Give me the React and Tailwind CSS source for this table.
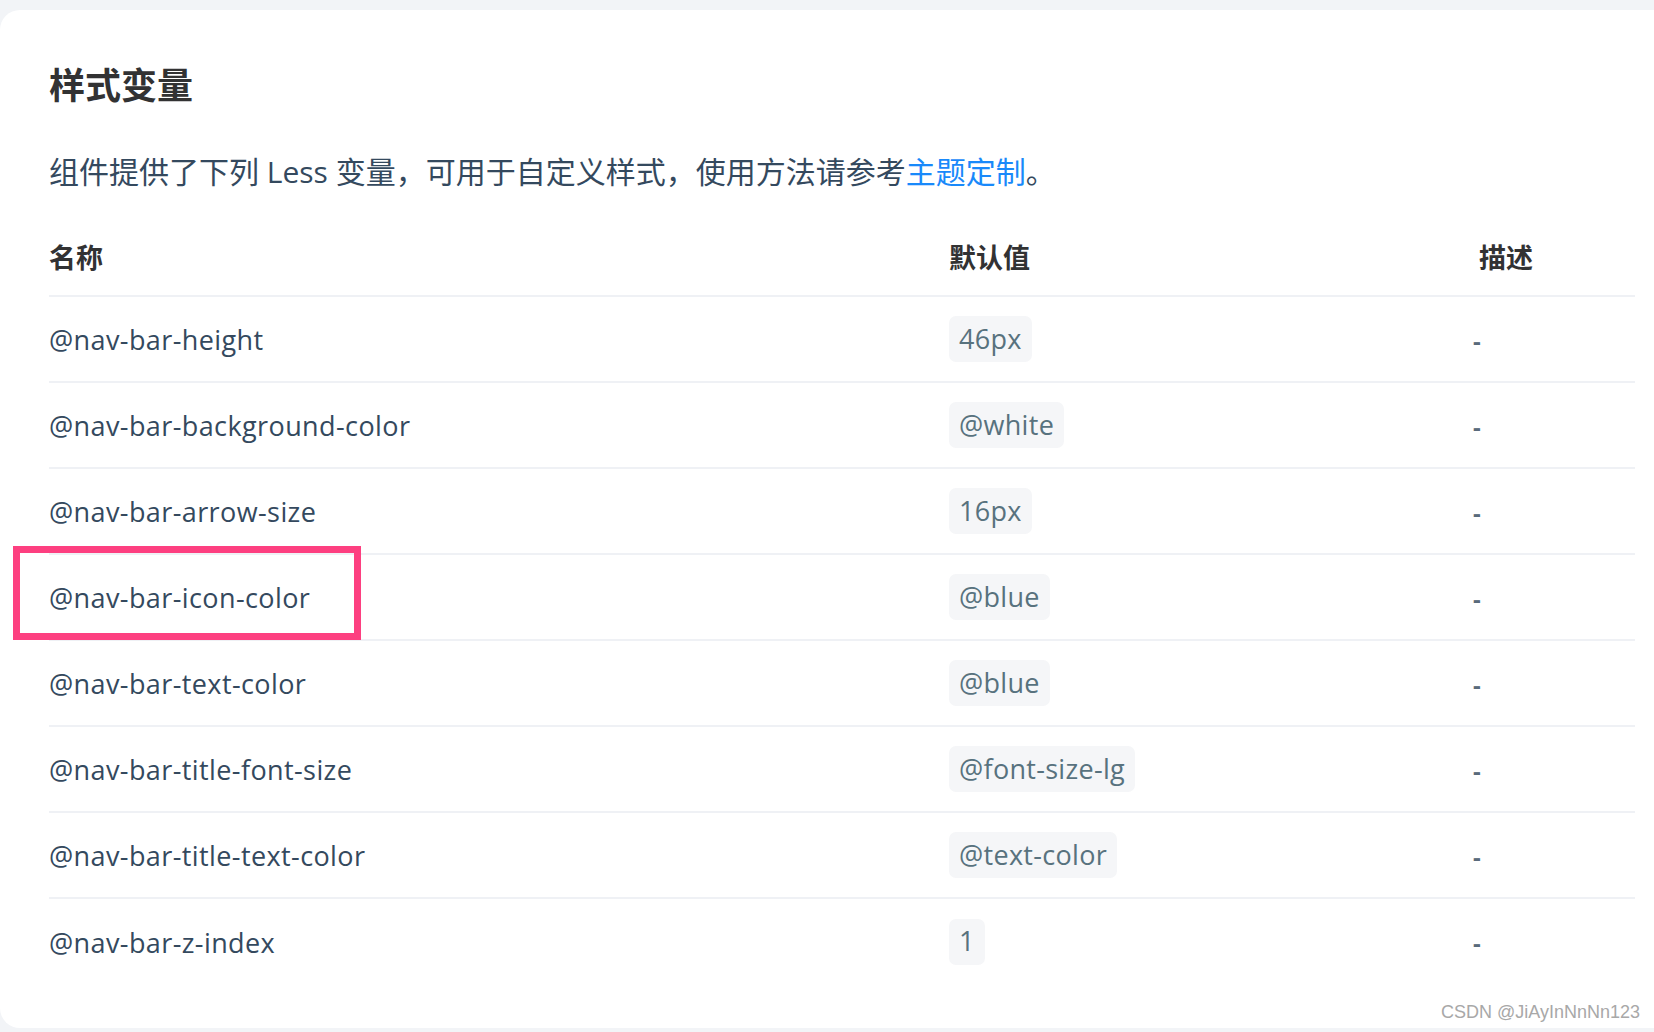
const rows = [
  { name: "@nav-bar-height", value: "46px" },
  { name: "@nav-bar-background-color", value: "@white" },
  { name: "@nav-bar-arrow-size", value: "16px" },
  { name: "@nav-bar-icon-color", value: "@blue", marked: true },
  { name: "@nav-bar-text-color", value: "@blue" },
  { name: "@nav-bar-title-font-size", value: "@font-size-lg" },
  { name: "@nav-bar-title-text-color", value: "@text-color" },
  { name: "@nav-bar-z-index", value: "1" },
];

const font = { fontFamily: '"Open Sans", "Noto Sans CJK SC", sans-serif' };

export default function App() {
  return (
    <div className="relative min-h-screen bg-[#f2f4f7] pt-[10px] pb-[4px]" style={font}>
      <div className="h-[1018px] rounded-l-[20px] bg-white pl-[49px] pr-[19px] pt-[54px]">
        {/* Title */}
        <h3 className="text-[36px] leading-[44px] font-bold text-[#323233]">样式变量</h3>

        <p className="mt-[44px] text-[30px] leading-[40px] text-[#34495e]">
          组件提供了下列 Less 变量，可用于自定义样式，使用方法请参考
          <a className="text-[#1989fa]">主题定制</a>。
        </p>

        {/* Table */}
        <div className="mt-[30px]">
          <div className="grid grid-cols-[900px_530px_1fr] h-[75px] items-center border-b-2 border-[#eff1f5] text-[27px] font-bold text-[#323233]">
            <div>名称</div>
            <div>默认值</div>
            <div>描述</div>
          </div>

          {rows.map((row, i) => (
            <div
              key={row.name}
              className={
                i === rows.length - 1
                  ? "relative grid grid-cols-[900px_530px_1fr] h-[85px] items-center text-[#34495e]"
                  : "relative grid grid-cols-[900px_530px_1fr] h-[86px] items-center border-b-2 border-[#eff1f5] text-[#34495e]"
              }
            >
              <div className="pt-[3px] text-[27px] tracking-[0.4px]">{row.name}</div>
              <div>
                <span className="inline-flex h-[46px] items-center rounded-[7px] bg-[#f5f6f8] px-[10px] text-[27px] tracking-[0.3px] text-[#58727e]">
                  {row.value}
                </span>
              </div>
              <div className="-ml-[6px] pt-[3px] text-[24px] font-bold text-[#5a6b7b]">-</div>

              {row.marked && (
                <div className="pointer-events-none absolute -top-[9px] -left-[36px] h-[94px] w-[348px] border-[7px] border-[#fd3f80]" />
              )}
            </div>
          ))}
        </div>
      </div>

      <div
        className="absolute right-[14px] bottom-[9px] text-[18px] leading-[22px] text-[#a8a8a8]"
        style={{ fontFamily: '"Liberation Sans", Arial, sans-serif', textShadow: "0 0 1px #fff" }}
      >
        CSDN @JiAyInNnNn123
      </div>
    </div>
  );
}
